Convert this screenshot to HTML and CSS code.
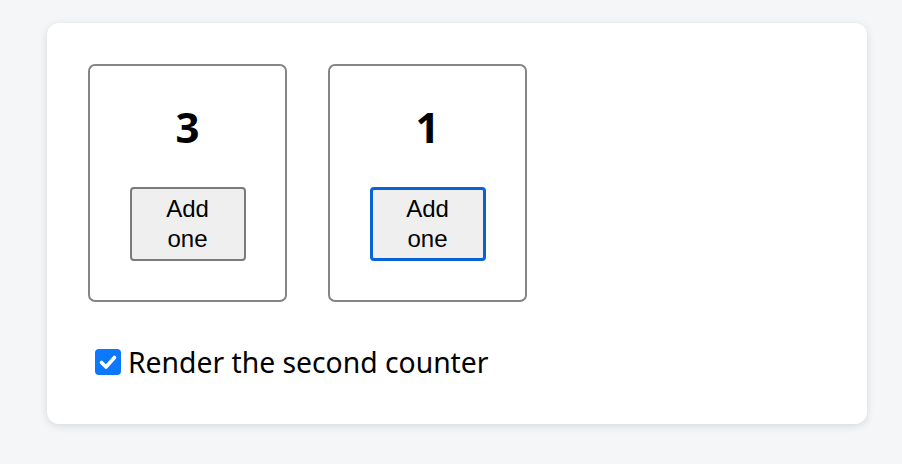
FILE: index.html
```html
<!DOCTYPE html>
<html>
<head>
<meta charset="utf-8">
<link rel="stylesheet" href="styles.css">
</head>
<body>
<div class="card">
  <div class="counters">
    <div class="counter">
      <div class="value">3</div>
      <button class="add">Add one</button>
    </div>
    <div class="counter">
      <div class="value">1</div>
      <button class="add focused">Add one</button>
    </div>
  </div>
  <label class="toggle">
    <span class="check"><svg width="26" height="26" viewBox="0 0 26 26"><path d="M6.5 13.5 L11 18 L19.5 8.5" fill="none" stroke="#fff" stroke-width="3.6" stroke-linecap="round" stroke-linejoin="round"/></svg></span>
    <span class="label-text">Render the second counter</span>
  </label>
</div>
</body>
</html>
```
FILE: styles.css
```css
html, body {
  margin: 0;
  padding: 0;
  background: #f5f6f8;
}
body {
  width: 902px;
  height: 464px;
  overflow: hidden;
  font-family: "Noto Sans", sans-serif;
}
.card {
  margin: 23px 0 0 47px;
  width: 820px;
  height: 401px;
  box-sizing: border-box;
  background: #fff;
  border-radius: 12px;
  box-shadow: 0 2px 8px rgba(0, 0, 0, 0.12);
  padding: 41px 0 0 41px;
}
.counters {
  display: flex;
  gap: 41px;
}
.counter {
  width: 199px;
  height: 238px;
  box-sizing: border-box;
  border: 2px solid #858585;
  border-radius: 7px;
  display: flex;
  flex-direction: column;
  align-items: center;
  padding-top: 36px;
}
.value {
  font-size: 42px;
  font-weight: 700;
  line-height: 50px;
  color: #000;
}
.add {
  margin-top: 35px;
  width: 116px;
  height: 74px;
  box-sizing: border-box;
  padding: 5px 16px;
  font-family: "Liberation Sans", Arial, sans-serif;
  font-size: 24px;
  line-height: 30px;
  color: #000;
  background: #efefef;
  border: 2px solid #7a7a7a;
  border-radius: 4px;
}
.add.focused {
  border: 3px solid #0762d4;
  padding: 4px 15px;
}
.toggle {
  display: flex;
  align-items: center;
  margin-top: 43px;
  margin-left: 7px;
  gap: 7px;
}
.check {
  width: 26px;
  height: 26px;
  border-radius: 4px;
  background: #0b78ff;
  display: flex;
}
.label-text {
  font-size: 28.3px;
  color: #000;
  line-height: 34px;
}
```
